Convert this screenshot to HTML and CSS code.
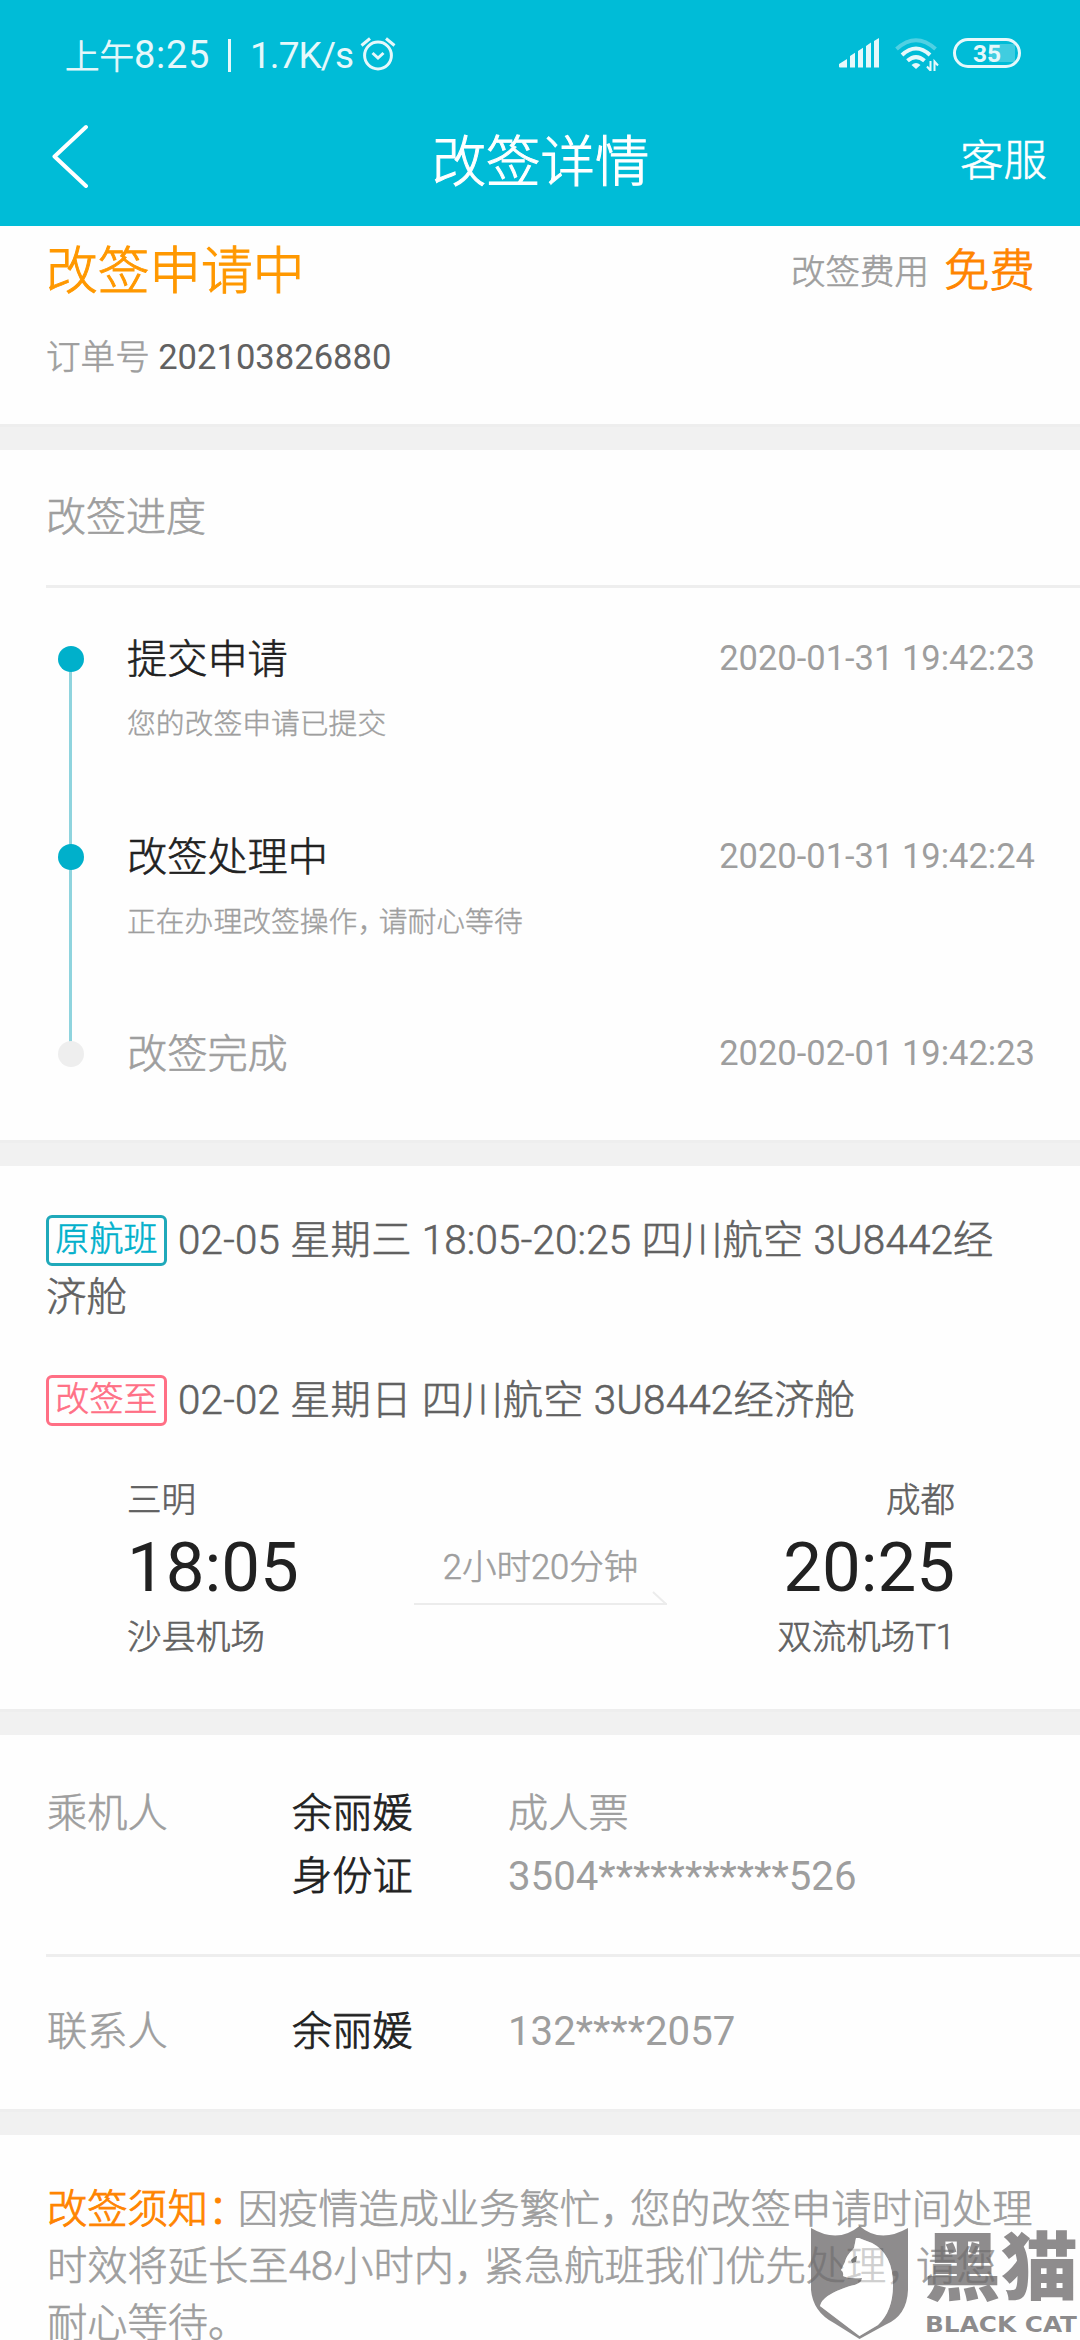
FILE: index.html
```html
<!DOCTYPE html>
<html lang="zh-CN">
<head>
    <meta charset="UTF-8">
    <meta name="viewport" content="width=device-width, initial-scale=1.0">
    <title>改签详情</title>
    <link rel="stylesheet" href="styles.css">
</head>
<body>
    <header class="header">
        <div class="status-bar">
            <div class="status-left">
                <span class="status-cn">上午</span><span class="status-time">8:25</span>
                <span class="status-sep"></span>
                <span class="status-speed">1.7K/s</span>
                <svg class="icon-alarm" width="36" height="36" viewBox="0 0 36 36" fill="none" stroke="#fff" stroke-width="3">
                    <circle cx="18" cy="19.5" r="13.4"/>
                    <path d="M12.5 17l5.500 5 5.500-5M1.500 9.500L10 2.500M34.500 9.500L26 2.500"/>
                </svg>
            </div>
            <div class="status-right">
                <svg class="icon-signal" width="40" height="30" viewBox="0 0 40 30" fill="#fff">
                    <path d="M0 26l8-5v8.500H1q-1 0-1-1zM11 18l5-3.200v14.700h-5zM19 13l5-3.200v19.700h-5zM27 8l5-3.500v25h-5zM35 3l5-3v29.500h-5z"/>
                </svg>
                <svg class="icon-wifi" width="44" height="34" viewBox="0 0 44 34" fill="none" stroke="#fff">
                    <path d="M1.500 11q19.500-17.500 39 0" stroke-width="4" opacity=".35"/>
                    <path d="M7 17q14-13 28 0" stroke-width="4"/>
                    <path d="M12.500 22.800q8.500-7.500 17 0" stroke-width="4"/>
                    <path d="M16.500 27q4.500-4 9 0L21 31z" fill="#fff" stroke="none"/>
                    <path d="M35.500 23v10M32 28.500l3.500 4M39.500 33V23.500l3.500 4" stroke-width="2"/>
                </svg>
                <div class="battery">35</div>
            </div>
        </div>
        <div class="title-bar">
            <svg class="icon-back" width="40" height="64" viewBox="0 0 40 64" fill="none" stroke="#fff" stroke-width="4" stroke-linecap="round" stroke-linejoin="round">
                <path d="M36 3L4.500 32.500 36 62"/>
            </svg>
            <h1>改签详情</h1>
            <a href="#" class="service">客服</a>
        </div>
    </header>

    <section class="summary">
        <div class="summary-row">
            <h2>改签申请中</h2>
            <div class="fee">改签费用<span class="free">免费</span></div>
        </div>
        <p class="order">订单号 <span>202103826880</span></p>
    </section>

    <div class="gap"></div>

    <section class="progress">
        <h3>改签进度</h3>
        <div class="divider"></div>
        <div class="steps">
            <div class="step done">
                <i class="dot"></i>
                <div class="step-head"><b>提交申请</b><time>2020-01-31 19:42:23</time></div>
                <p>您的改签申请已提交</p>
            </div>
            <div class="step done">
                <i class="dot"></i>
                <div class="step-head"><b>改签处理中</b><time>2020-01-31 19:42:24</time></div>
                <p>正在办理改签操作<span class="punct">，</span>请耐心等待</p>
            </div>
            <div class="step">
                <i class="dot"></i>
                <div class="step-head"><b>改签完成</b><time>2020-02-01 19:42:23</time></div>
            </div>
        </div>
    </section>

    <div class="gap"></div>

    <section class="flight">
        <p class="flight-info"><span class="tag tag-old">原航班</span>02-05 星期三 18:05-20:25 四川航空 3U8442经<br>济舱</p>
        <p class="flight-info"><span class="tag tag-new">改签至</span>02-02 星期日 四川航空 3U8442经济舱</p>
        <div class="route">
            <div class="place">
                <div class="city">三明</div>
                <div class="clock">18:05</div>
                <div class="airport">沙县机场</div>
            </div>
            <div class="duration">
                <span>2小时20分钟</span>
                <svg width="253" height="14" viewBox="0 0 253 14" fill="none" stroke="#ececec" stroke-width="2">
                    <path d="M0 13h253M239 1l13 12"/>
                </svg>
            </div>
            <div class="place arrive">
                <div class="city">成都</div>
                <div class="clock">20:25</div>
                <div class="airport">双流机场T1</div>
            </div>
        </div>
    </section>

    <div class="gap"></div>

    <section class="people">
        <div class="person">
            <span class="label">乘机人</span>
            <div class="name">余丽媛<br>身份证</div>
            <div class="value">成人票<br><span class="num">3504***********526</span></div>
        </div>
        <div class="divider"></div>
        <div class="person contact">
            <span class="label">联系人</span>
            <div class="name">余丽媛</div>
            <div class="value num">132****2057</div>
        </div>
    </section>

    <div class="gap"></div>

    <section class="notice">
        <p><span class="notice-title">改签须知<span class="punct">：</span></span>因疫情造成业务繁忙<span class="punct">，</span>您的改签申请时间处理<br>时效将延长至48小时内<span class="punct">，</span>紧急航班我们优先处理<span class="punct">，</span>请您<br>耐心等待。</p>
    </section>

    <!-- watermark -->
    <svg class="watermark" width="270" height="116" viewBox="0 0 270 116">
        <path fill="#6e6c6d" fill-opacity=".78" fill-rule="evenodd" d="M1 4Q28 20 49.500 2 70 20 98 4V66Q97 92 75 101L49.500 115 24 99Q3 88 1 66ZM10 82L49.500 112 68 101Q83 87 83 61 83 30 62 19L54 16 49 14 46 14 44 24Q36 32 35 38L31 46Q34 48 33 52 39 55 52 54 52 60 40 62 12 71 10 82Z"/>
        <path fill="#fff" fill-opacity=".5" d="M10 82L49.500 112 68 101Q83 87 83 61 83 30 62 19L54 16 49 14 46 14 44 24Q36 32 35 38L31 46Q34 48 33 52 39 55 52 54 52 60 40 62 12 71 10 82Z"/>
        <path fill="#777" d="M41 36q4-4 6-4l-1 6-4 1z"/>
        <text class="wm-name" x="114" y="70" textLength="154" lengthAdjust="spacingAndGlyphs">黑猫</text>
        <text class="wm-en" x="115" y="108" textLength="152" lengthAdjust="spacingAndGlyphs">BLACK CAT</text>
    </svg>
</body>
</html>
```
FILE: styles.css
```css
* {
    box-sizing: border-box;
    margin: 0;
    padding: 0;
}
body {
    position: relative;
    width: 1080px;
    height: 2340px;
    overflow: hidden;
    background-color: #fefefe;
    font-family: Roboto, "Noto Sans CJK SC", sans-serif;
    font-weight: 300;
    font-size: 40.2px;
    color: #9e9e9e;
    -webkit-text-stroke: 0.6px;
}
h1, h2, h3, b {
    font-weight: 300;
}

/* header */
.header {
    height: 226px;
    background-color: #00bcd7;
    color: #fff;
}
.status-bar {
    display: flex;
    justify-content: space-between;
    height: 110px;
    padding: 0 59px 0 65px;
}
.status-left, .status-right {
    display: flex;
    align-items: center;
    opacity: 0.9;
    font-weight: 400;
    -webkit-text-stroke: 0;
}
.status-cn {
    margin-top: -2px;
    font-size: 34.5px;
    font-weight: 300;
    -webkit-text-stroke: 0.8px;
}
.status-time {
    font-size: 38px;
    letter-spacing: 0.7px;
}
.status-sep {
    width: 3px;
    height: 33px;
    margin: 0 19px 0 18px;
    background-color: #fff;
}
.status-speed {
    font-size: 37px;
    letter-spacing: -1px;
}
.icon-alarm {
    margin: -2px 0 0 7px;
}
.status-right {
    height: 106px;
}
.icon-wifi {
    margin: 4px 14px 0 16px;
}
.battery {
    width: 68px;
    height: 30px;
    border: 3px solid #fff;
    border-radius: 15px;
    background: linear-gradient(rgba(255, 255, 255, 0.28), rgba(255, 255, 255, 0.28)) 33px 3px / 26px 18px no-repeat;
    font-size: 24.5px;
    font-weight: 700;
    line-height: 25px;
    text-align: center;
}
.title-bar {
    display: flex;
    justify-content: space-between;
    align-items: center;
    height: 94px;
    padding: 0 33px 0 50px;
}
.icon-back {
    margin-top: -2px;
}
.title-bar h1 {
    margin-left: 31px;
    font-size: 54.4px;
    -webkit-text-stroke: 1px;
}
.service {
    color: #fff;
    font-size: 43.5px;
    text-decoration: none;
}

/* order summary */
.summary {
    height: 198px;
    padding: 0 45px 0 46px;
}
.summary-row {
    display: flex;
    justify-content: space-between;
    line-height: 92px;
    height: 91px;
}
.summary h2 {
    font-size: 51.7px;
    color: #ff9800;
    -webkit-text-stroke: 1px;
}
.fee {
    display: flex;
    font-size: 34.5px;
}
.free {
    margin-left: 15px;
    font-size: 45.5px;
    color: #ff8400;
    -webkit-text-stroke: 0.9px;
}
.order {
    font-size: 34.6px;
    line-height: 81px;
}
.order span {
    font-weight: 400;
    color: #616161;
    -webkit-text-stroke: 0;
}
.gap {
    height: 26px;
    background-color: #f1f1f1;
    border-top: 3px solid #eee;
}
.divider {
    height: 3px;
    margin-left: 46px;
    background-color: #eee;
}

/* progress */
.progress {
    height: 690px;
}
.progress h3 {
    height: 135px;
    padding-left: 46px;
    font-size: 40px;
    line-height: 136px;
}
.steps {
    padding: 44px 45px 0 58px;
}
.step {
    position: relative;
    height: 197.5px;
    padding-left: 69px;
}
.dot {
    position: absolute;
    left: 0;
    top: 14px;
    width: 26px;
    height: 26px;
    border-radius: 50%;
    background-color: #eee;
    z-index: 1;
}
.done .dot {
    background-color: #00b0cb;
}
.done::before {
    content: "";
    position: absolute;
    left: 11px;
    top: 27px;
    width: 3px;
    height: 100%;
    background-color: #8fd4de;
}
.step-head {
    display: flex;
    justify-content: space-between;
    line-height: 55px;
}
.done b {
    color: #212121;
}
.step time {
    font-size: 34.5px;
    font-weight: 400;
    line-height: 53px;
    -webkit-text-stroke: 0;
}
.step p {
    margin-top: 17px;
    font-size: 28.8px;
    line-height: 40px;
    -webkit-text-stroke: 0.4px;
}
.punct {
    letter-spacing: -0.26em;
}

/* flight */
.flight {
    height: 543px;
    padding: 46px 46px 0;
    color: #616161;
}
.flight-info {
    margin-bottom: 46px;
    font-size: 40.3px;
    line-height: 57px;
    letter-spacing: 0.22px;
    white-space: nowrap;
}
.tag {
    display: inline-block;
    height: 51px;
    width: 121px;
    margin: -6px 11px 0 0;
    border: 3px solid;
    border-radius: 6px;
    font-size: 34px;
    line-height: 43px;
    text-align: center;
    vertical-align: middle;
}
.tag-old {
    color: #00b0cb;
    border-color: #1fa9ba;
}
.tag-new {
    color: #ff6f85;
}
.route {
    display: grid;
    grid-template-columns: 287px 253px 1fr;
    padding: 3px 79px 0 81px;
}
.arrive {
    text-align: right;
}
.city {
    font-size: 34.5px;
    line-height: 44px;
}
.clock {
    color: #212121;
    font-size: 69px;
    font-weight: 400;
    line-height: 92px;
    -webkit-text-stroke: 0;
}
.airport {
    font-size: 34.5px;
    line-height: 47px;
}
.duration {
    padding-top: 55px;
    color: #9e9e9e;
    font-size: 34.5px;
    line-height: 68px;
    text-align: center;
}
.duration span, .duration svg {
    display: block;
}
.duration svg {
    margin-top: -10px;
}

/* passenger and contact */
.people {
    height: 374px;
}
.person {
    display: grid;
    grid-template-columns: 245px 216px 1fr;
    padding: 47px 47px 46px;
    line-height: 63px;
}
.contact {
    padding-top: 43px;
}
.name {
    color: #212121;
    -webkit-text-stroke: 0.8px;
}
.num {
    font-weight: 400;
    -webkit-text-stroke: 0;
}

/* notice */
.notice {
    padding: 46px 0 0 47px;
    font-size: 40.25px;
    line-height: 57px;
    white-space: nowrap;
}
.notice-title {
    color: #ff8400;
    -webkit-text-stroke: 0.9px;
}
.watermark {
    position: absolute;
    right: 0;
    bottom: 0;
}
.watermark text {
    fill: #6e6c6d;
    fill-opacity: 0.78;
    stroke: none;
    -webkit-text-stroke: 0;
}
.wm-name {
    font-family: "Noto Sans CJK SC", sans-serif;
    font-size: 74px;
    font-weight: 900;
}
.wm-en {
    font-family: "DejaVu Sans", sans-serif;
    font-size: 22px;
    font-weight: 700;
}
```
